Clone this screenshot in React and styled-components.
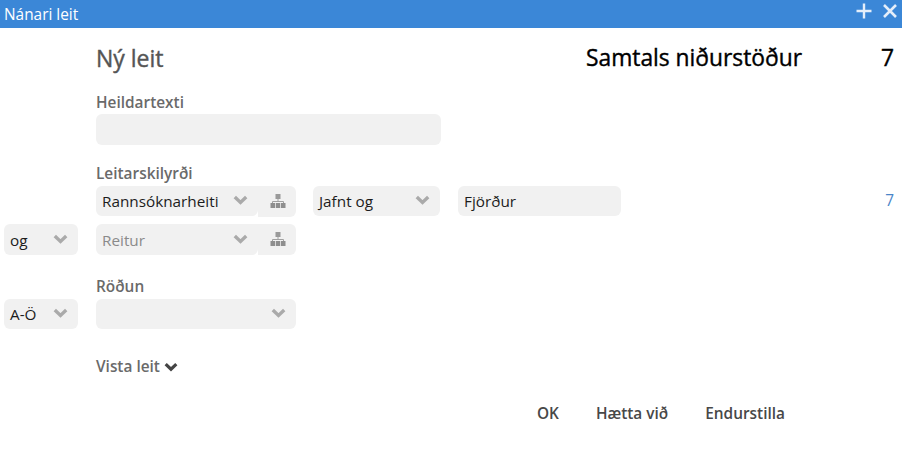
import React from 'react';
import styled, { createGlobalStyle } from 'styled-components';

const GlobalStyle = createGlobalStyle`
  html, body {
    margin: 0;
    padding: 0;
    background: #fff;
  }
  body {
    font-family: 'Open Sans', sans-serif;
  }
`;

const Window = styled.div`
  width: 902px;
  height: 472px;
  overflow: hidden;
  display: flex;
  flex-direction: column;
`;

const TitleBar = styled.div`
  height: 28px;
  background: #3b87d7;
  display: flex;
  align-items: center;
  justify-content: space-between;
  padding: 0 4px 0 4px;
  color: #fff;
  font-size: 15.4px;
`;

const TitleIcons = styled.div`
  display: flex;
  align-items: center;
  gap: 10px;
  margin-bottom: 7px;
`;

const Header = styled.div`
  display: flex;
  align-items: center;
  height: 59px;
  padding: 0 8px 0 96px;
`;

const Heading = styled.h1`
  margin: 0;
  flex: 1;
  font-size: 23px;
  font-weight: 500;
  -webkit-text-stroke: 0.4px #555;
  color: #555;
`;

const Total = styled.div`
  font-size: 22.8px;
  font-weight: 500;
  -webkit-text-stroke: 0.4px #000;
  color: #000;
`;

const TotalCount = styled(Total)`
  width: 92px;
  text-align: right;
`;

const Label = styled.div`
  margin-left: 96px;
  font-size: 15.4px;
  line-height: 18px;
  font-weight: 600;
  color: #6a6a6a;
  margin-top: ${({ $top }) => $top}px;
  margin-bottom: ${({ $bottom }) => $bottom || 0}px;
`;

const Row = styled.div`
  display: flex;
  align-items: flex-start;
  padding: 0 8px 0 4px;
  margin-top: ${({ $top }) => $top || 0}px;
`;

const Spacer = styled.div`
  width: 92px;
`;

const Field = styled.div`
  display: flex;
  align-items: center;
  box-sizing: border-box;
  width: ${({ $width }) => $width}px;
  height: ${({ $height }) => $height || 31}px;
  margin-right: ${({ $gap }) => $gap || 0}px;
  padding: 0 6px;
  border-radius: 6px;
  background: #f1f1f1;
  font-size: 15.3px;
  color: ${({ $muted }) => ($muted ? '#8a8a8a' : '#1c1c1c')};
`;

const TreeField = styled.div`
  display: flex;
  align-items: flex-start;
  width: 200px;
  margin-right: ${({ $gap }) => $gap || 0}px;
`;

const TreeSelect = styled(Field)`
  flex: 1;
  width: auto;
  border-radius: 6px 0 6px 6px;
  padding-right: 10px;
`;

const TreeButton = styled.div`
  display: flex;
  align-items: center;
  justify-content: flex-start;
  box-sizing: border-box;
  width: 38px;
  height: 31px;
  padding-left: 12px;
  border-radius: 0 6px 6px 0;
  background: #f1f1f1;
`;

const FieldText = styled.span`
  flex: 1;
  white-space: nowrap;
`;

const Chevron = styled.svg`
  display: block;
  flex: none;
  width: ${({ $size }) => $size || 15}px;
  height: 10px;
  margin-right: ${({ $right }) => $right ?? 4}px;
  margin-bottom: ${({ $lift }) => $lift ?? 2}px;
`;

const TreeIcon = styled.svg`
  display: block;
  flex: none;
  width: 16px;
  height: 14px;
  margin-bottom: 2px;
`;

const ResultCount = styled.div`
  margin-left: auto;
  font-size: 15.4px;
  line-height: 30px;
  color: #4a85c8;
`;

const MoreLink = styled.div`
  display: flex;
  align-items: center;
  gap: 4px;
  margin: 27px 0 0 96px;
  font-size: 15.4px;
  font-weight: 600;
  color: #6a6a6a;
`;

const Actions = styled.div`
  display: flex;
  gap: 37px;
  margin: 27px 0 0 537px;
`;

const ActionButton = styled.button`
  border: 0;
  padding: 0;
  background: none;
  font-family: inherit;
  font-size: 15.4px;
  font-weight: 600;
  line-height: 20px;
  color: #484848;
`;

const ChevronIcon = ({ color = '#aaa', right, size, lift }) => (
  <Chevron viewBox="0 0 15 10" $right={right} $size={size} $lift={lift}>
    <path d="M1.8 2 7.5 7.4 13.2 2" fill="none" stroke={color} strokeWidth="3.4" />
  </Chevron>
);

const HierarchyIcon = () => (
  <TreeIcon viewBox="0 0 16 14">
    <path d="M8 5v3M2.5 9V7.5h11V9" fill="none" stroke="#a0a0a0" strokeWidth="1" />
    <rect x="5.5" y="0" width="5" height="5" fill="#9a9a9a" />
    <rect x="0.5" y="9" width="4.5" height="5" fill="#8e8e8e" />
    <rect x="5.75" y="9" width="4.5" height="5" fill="#8e8e8e" />
    <rect x="11" y="9" width="4.5" height="5" fill="#8e8e8e" />
  </TreeIcon>
);

const App = () => (
  <Window>
    <GlobalStyle />
    <TitleBar>
      <span>Nánari leit</span>
      <TitleIcons>
        <svg width="16" height="16" viewBox="0 0 16 16">
          <path d="M8 .5v15M.5 8h15" stroke="#e4eefa" strokeWidth="2.4" />
        </svg>
        <svg width="16" height="16" viewBox="0 0 16 16">
          <path d="M2 2l12 12M14 2 2 14" stroke="#e4eefa" strokeWidth="2.6" />
        </svg>
      </TitleIcons>
    </TitleBar>

    <Header>
      <Heading>Ný leit</Heading>
      <Total>Samtals niðurstöður</Total>
      <TotalCount>7</TotalCount>
    </Header>

    <Label $top={7} $bottom={2}>Heildartexti</Label>
    <Row>
      <Spacer />
      <Field $width={345} />
    </Row>

    <Label $top={20} $bottom={3}>Leitarskilyrði</Label>
    <Row>
      <Spacer />
      <TreeField $gap={17}>
        <TreeSelect $height={30}>
          <FieldText>Rannsóknarheiti</FieldText>
          <ChevronIcon right={0} />
        </TreeSelect>
        <TreeButton>
          <HierarchyIcon />
        </TreeButton>
      </TreeField>
      <Field $width={127} $gap={18} $height={30}>
        <FieldText>Jafnt og</FieldText>
        <ChevronIcon />
      </Field>
      <Field $width={163} $height={30}>
        <FieldText>Fjörður</FieldText>
      </Field>
      <ResultCount>7</ResultCount>
    </Row>
    <Row $top={7}>
      <Field $width={74} $gap={18}>
        <FieldText>og</FieldText>
        <ChevronIcon />
      </Field>
      <TreeField>
        <TreeSelect $muted>
          <FieldText>Reitur</FieldText>
          <ChevronIcon right={0} />
        </TreeSelect>
        <TreeButton>
          <HierarchyIcon />
        </TreeButton>
      </TreeField>
    </Row>

    <Label $top={23} $bottom={3}>Röðun</Label>
    <Row>
      <Field $width={74} $gap={18} $height={30}>
        <FieldText>A-Ö</FieldText>
        <ChevronIcon />
      </Field>
      <Field $width={200} $height={30}>
        <FieldText />
        <ChevronIcon />
      </Field>
    </Row>

    <MoreLink>
      Vista leit
      <ChevronIcon color="#444" right={0} size={14} lift={0} />
    </MoreLink>

    <Actions>
      <ActionButton>OK</ActionButton>
      <ActionButton>Hætta við</ActionButton>
      <ActionButton>Endurstilla</ActionButton>
    </Actions>
  </Window>
);

export default App;
